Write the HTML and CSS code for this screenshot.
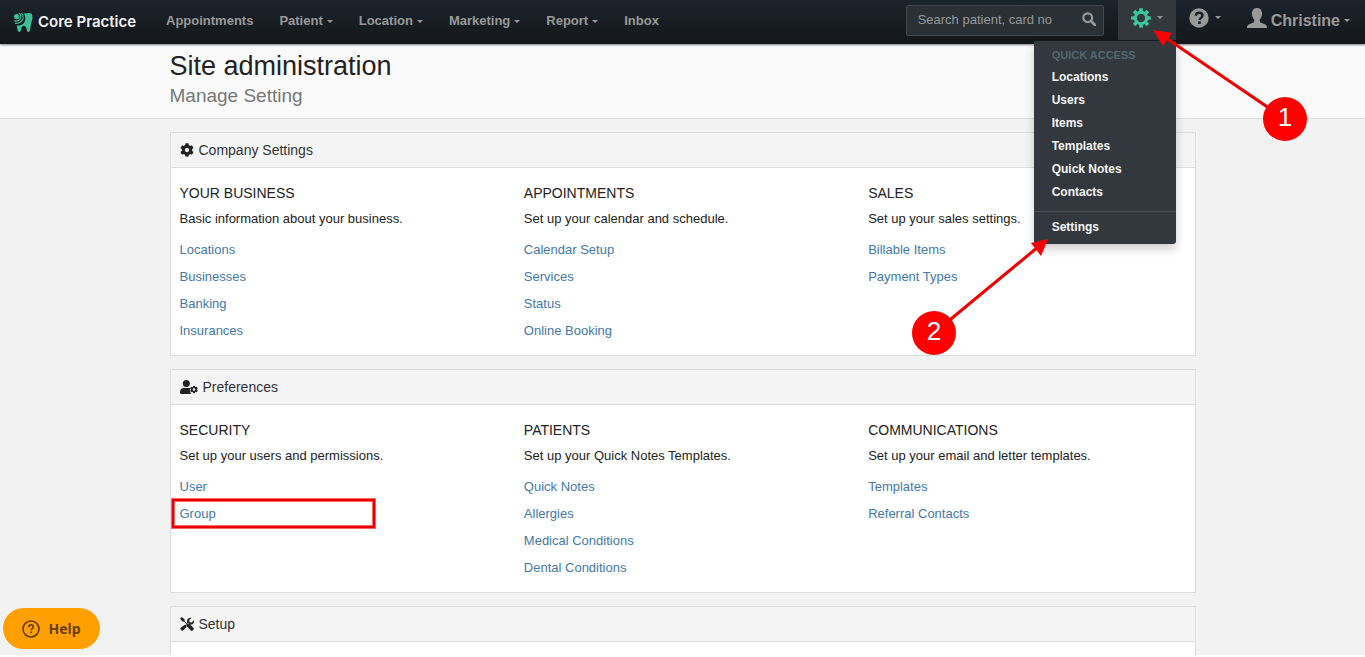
FILE: index.html
```html
<!DOCTYPE html>
<html lang="en">
<head>
    <meta charset="UTF-8">
    <meta name="viewport" content="width=device-width, initial-scale=1.0">
    <title>Site administration | Core Practice</title>
    <link rel="stylesheet" href="styles.css">
</head>
<body>
    <svg class="sprite" aria-hidden="true">
        <symbol id="icon-cog" viewBox="0 0 512 512">
            <path d="M487.4 315.7l-42.6-24.6c4.3-23.2 4.3-47 0-70.2l42.6-24.6c4.9-2.8 7.1-8.6 5.5-14-11.1-35.6-30-67.8-54.7-94.6-3.8-4.1-10-5.1-14.8-2.3L380.8 110c-17.9-15.4-38.5-27.3-60.8-35.1V25.8c0-5.6-3.9-10.5-9.4-11.7-36.7-8.2-74.3-7.8-109.2 0-5.5 1.2-9.4 6.1-9.4 11.7V75c-22.2 7.9-42.8 19.8-60.8 35.1L88.7 85.5c-4.9-2.8-11-1.9-14.8 2.3-24.7 26.7-43.6 58.9-54.7 94.6-1.7 5.4.6 11.2 5.5 14L67.3 221c-4.3 23.2-4.3 47 0 70.2l-42.6 24.6c-4.9 2.8-7.1 8.6-5.5 14 11.1 35.6 30 67.8 54.7 94.6 3.8 4.1 10 5.1 14.8 2.3l42.6-24.6c17.9 15.4 38.5 27.3 60.8 35.1v49.2c0 5.6 3.9 10.5 9.4 11.7 36.7 8.2 74.3 7.8 109.2 0 5.5-1.2 9.4-6.1 9.4-11.7v-49.2c22.2-7.9 42.8-19.8 60.8-35.1l42.6 24.6c4.9 2.8 11 1.9 14.8-2.3 24.7-26.7 43.6-58.9 54.7-94.6 1.5-5.5-.7-11.3-5.6-14.1zM256 336c-44.1 0-80-35.9-80-80s35.9-80 80-80 80 35.9 80 80-35.9 80-80 80z"/>
        </symbol>
    </svg>

    <div class="page">
        <header class="topbar">
            <a class="brand" href="#">
                <svg width="20" height="21" viewBox="0 0 20 21" aria-hidden="true">
                    <path d="M10.800 1.400C13 2 15.500.600 17.500 1.200c2 .7 2.200 3.400 1.800 5.800-.4 2.400-1.200 4.300-1.600 6.700-.4 2.500-.6 6.300-2.300 6.300-1.600 0-1.500-2.500-2.200-4.300-.5-1.300-1.200-2-2.300-2s-2 .9-2.400 2.300c-.5 1.700-.6 4-2 4-1.800 0-2.300-3.600-2.800-6.600 4.500.7 8.600-2 8.600-6.900 0-2-.5-3.700-1.500-5.100z" fill="#3dbd99"/>
                    <circle cx="3.600" cy="4.600" r="2.600" fill="#3dbd99"/>
                    <path d="M6.300 1.200c1.700 1.900 1.800 4.600.5 6.200-1.300 1.600-3.500 2-5.500 1.200M8.500.900c2.100 2.600 2.100 6.100.2 8.300-1.800 2-4.400 2.600-6.800 2" fill="none" stroke="#3dbd99" stroke-width="1.200"/>
                </svg>
                <span>Core Practice</span>
            </a>
            <nav class="nav">
                <a href="#">Appointments</a>
                <a href="#">Patient <i class="caret"></i></a>
                <a href="#">Location <i class="caret"></i></a>
                <a href="#">Marketing <i class="caret"></i></a>
                <a href="#">Report <i class="caret"></i></a>
                <a href="#">Inbox</a>
            </nav>
            <form class="search">
                <input type="text" placeholder="Search patient, card no" aria-label="Search patient, card no">
                <button type="submit" aria-label="Search">
                    <svg width="14" height="14" viewBox="0 0 14 14" aria-hidden="true">
                        <circle cx="5.700" cy="5.700" r="4.400" fill="none" stroke="currentColor" stroke-width="2.200"/>
                        <path d="M9 9l4 4" stroke="currentColor" stroke-width="2.600" stroke-linecap="round"/>
                    </svg>
                </button>
            </form>
            <div class="quick">
                <button class="tool tool-open" type="button" aria-label="Quick access">
                    <svg width="20" height="20" viewBox="-10 -10 20 20" fill="none" stroke="#3dc79c" aria-hidden="true">
                        <circle r="5.700" stroke-width="3"/>
                        <path d="M0-6.500V-9.800M0 6.500V9.800M-6.500 0H-9.800M6.500 0H9.800M4.600-4.600L6.900-6.900M-4.600-4.600L-6.900-6.900M4.600 4.600L6.900 6.900M-4.600 4.600L-6.900 6.900" stroke-width="3.600"/>
                    </svg>
                    <i class="caret"></i>
                </button>
                <div class="menu">
                    <h2>QUICK ACCESS</h2>
                    <a href="#">Locations</a>
                    <a href="#">Users</a>
                    <a href="#">Items</a>
                    <a href="#">Templates</a>
                    <a href="#">Quick Notes</a>
                    <a href="#">Contacts</a>
                    <hr>
                    <a href="#">Settings</a>
                </div>
            </div>
            <button class="tool" type="button" aria-label="Help">
                <svg width="20" height="20" viewBox="0 0 20 20" aria-hidden="true">
                    <circle cx="10" cy="10" r="9.700" fill="#999"/>
                    <path d="M6.700 7.600C6.900 5.600 8.300 4.700 10 4.700c2 0 3.500 1 3.500 2.800 0 2.400-3 2.300-3 4.500" fill="none" stroke="#181e23" stroke-width="2.400"/>
                    <path d="M9.100 13.400h2.700v2.600H9.100z" fill="#181e23"/>
                </svg>
                <i class="caret"></i>
            </button>
            <button class="tool tool-user" type="button">
                <svg width="20" height="20" viewBox="0 0 20 20" fill="#999" aria-hidden="true">
                    <path d="M10 0c3.100 0 5.100 2.200 5.100 5.500 0 2.600-1.100 4.700-2.300 6v1.700c0 .8.500 1.200 1.400 1.600l3.600 1.500c1.500.7 2.200 1.400 2.200 3.700H0c0-2.300.7-3 2.200-3.700l3.600-1.500c.9-.4 1.400-.8 1.400-1.600v-1.700c-1.200-1.300-2.300-3.400-2.300-6C4.900 2.200 6.900 0 10 0z"/>
                </svg>
                <span>Christine</span>
                <i class="caret"></i>
            </button>
        </header>

        <div class="title-bar">
            <div class="container">
                <h1>Site administration</h1>
                <p>Manage Setting</p>
            </div>
        </div>

        <main class="container main">
            <section class="panel">
                <h2 class="panel-title">
                    <svg width="14" height="14" aria-hidden="true"><use href="#icon-cog"/></svg>
                    Company Settings
                </h2>
                <div class="panel-body">
                    <div>
                        <h3>YOUR BUSINESS</h3>
                        <p>Basic information about your business.</p>
                        <ul>
                            <li><a href="#">Locations</a></li>
                            <li><a href="#">Businesses</a></li>
                            <li><a href="#">Banking</a></li>
                            <li><a href="#">Insurances</a></li>
                        </ul>
                    </div>
                    <div>
                        <h3>APPOINTMENTS</h3>
                        <p>Set up your calendar and schedule.</p>
                        <ul>
                            <li><a href="#">Calendar Setup</a></li>
                            <li><a href="#">Services</a></li>
                            <li><a href="#">Status</a></li>
                            <li><a href="#">Online Booking</a></li>
                        </ul>
                    </div>
                    <div>
                        <h3>SALES</h3>
                        <p>Set up your sales settings.</p>
                        <ul>
                            <li><a href="#">Billable Items</a></li>
                            <li><a href="#">Payment Types</a></li>
                        </ul>
                    </div>
                </div>
            </section>

            <section class="panel">
                <h2 class="panel-title">
                    <svg width="18" height="14" viewBox="0 0 18 14" aria-hidden="true">
                        <circle cx="6.300" cy="3.600" r="3.500"/>
                        <path d="M3.800 8h5.400c.4 0 .8.100 1.200.2-.8 1.500-.7 4.200 1 5.800H1.200C.5 14 0 13.500 0 12.800v-1C0 9.700 1.700 8 3.800 8z"/>
                        <use href="#icon-cog" x="10" y="5.500" width="8" height="8"/>
                    </svg>
                    Preferences
                </h2>
                <div class="panel-body">
                    <div>
                        <h3>SECURITY</h3>
                        <p>Set up your users and permissions.</p>
                        <ul>
                            <li><a href="#">User</a></li>
                            <li class="marked"><a href="#">Group</a></li>
                        </ul>
                    </div>
                    <div>
                        <h3>PATIENTS</h3>
                        <p>Set up your Quick Notes Templates.</p>
                        <ul>
                            <li><a href="#">Quick Notes</a></li>
                            <li><a href="#">Allergies</a></li>
                            <li><a href="#">Medical Conditions</a></li>
                            <li><a href="#">Dental Conditions</a></li>
                        </ul>
                    </div>
                    <div>
                        <h3>COMMUNICATIONS</h3>
                        <p>Set up your email and letter templates.</p>
                        <ul>
                            <li><a href="#">Templates</a></li>
                            <li><a href="#">Referral Contacts</a></li>
                        </ul>
                    </div>
                </div>
            </section>

            <section class="panel">
                <h2 class="panel-title">
                    <svg width="14" height="14" viewBox="0 0 14 14" aria-hidden="true">
                        <path d="M0 1.600L1.600 0l3 2.300v1.600l2.700 2.700c.8-.4 1.700-.2 2.300.4l3.900 3.900c.5.500.5 1.200 0 1.700l-.9.900c-.5.500-1.200.5-1.700 0L7 9.600c-.6-.6-.8-1.600-.4-2.300L3.900 4.600H2.300z"/>
                        <path d="M13.900 3.300c.3 1.300 0 2.500-.9 3.400-.8.800-1.900 1.100-2.900 1L9.200 6.800c-.7-.7-1.400-1-2.200-1-.3-1.400 0-3 1-4 .9-.9 2.200-1.200 3.400-.9L9.200 3.100l.4 2.100 2.100.4zM5.300 7.500l1 1c0 .5.100 1 .3 1.500l-3 3.100c-.7.7-1.900.7-2.600 0s-.7-1.900 0-2.600z"/>
                    </svg>
                    Setup
                </h2>
                <div class="panel-body"></div>
            </section>
        </main>

        <button class="help" type="button">
            <svg width="18" height="18" viewBox="0 0 18 18" fill="none" stroke="currentColor" aria-hidden="true">
                <circle cx="9" cy="9" r="8" stroke-width="1.600"/>
                <path d="M6.700 7.200c0-1.500 1-2.300 2.300-2.300s2.300.8 2.300 2.100c0 1.700-2.200 1.700-2.200 3.300" stroke-width="1.600"/>
                <path d="M9.100 11.600v1.700" stroke-width="1.800"/>
            </svg>
            Help
        </button>

        <div class="steps">
            <svg width="1365" height="400" aria-hidden="true">
                <path d="M1285 119L1166 38M934 333L1038 247" stroke="#f00000" stroke-width="3"/>
                <path d="M1153 30l19 3-9 13zM1048 239l-7 17-10-13z" fill="#f00"/>
            </svg>
            <span class="step step-1">1</span>
            <span class="step step-2">2</span>
        </div>
    </div>
</body>
</html>
```

FILE: styles.css
```css
:root {
    --text-color: #222;
    --link-color: #4578a5;
    --muted-color: #999;
    --border-color: #ddd;
    --menu-color: #32383e;
    --mark-color: #f00;
}

*,
*::after {
    box-sizing: border-box;
    margin: 0;
    padding: 0;
}

html {
    background-color: #fff;
}

body {
    font-family: "Liberation Sans", Arial, Helvetica, sans-serif;
    font-size: 13px;
    line-height: 20px;
    color: var(--text-color);
}

a {
    color: var(--link-color);
    text-decoration: none;
}

button {
    font: inherit;
    color: inherit;
    background: none;
    border: none;
    cursor: pointer;
}

.sprite {
    position: absolute;
    width: 0;
    height: 0;
}

.page {
    position: relative;
    height: calc(100vh - 2px);
    overflow: hidden;
    background-color: #f2f2f2;
}

.container {
    max-width: 1026px;
    margin: 0 auto;
}

/* top bar */
.topbar {
    display: flex;
    align-items: flex-start;
    height: 44px;
    padding: 0 2px 0 13px;
    background: linear-gradient(#1b232c, #14171a);
    box-shadow: 0 1px 2px rgba(0, 0, 0, 0.5);
    position: relative;
    color: var(--muted-color);
}

.brand {
    display: flex;
    align-items: center;
    gap: 5px;
    height: 44px;
    width: 140px;
    font-family: Inter, sans-serif;
    font-size: 15px;
    font-weight: 600;
    color: #f2f2f2;
    white-space: nowrap;
}

.nav {
    display: flex;
    flex: 1;
    font-weight: bold;
}

.nav a {
    display: flex;
    align-items: center;
    gap: 4px;
    height: 42px;
    padding: 0 13px;
    color: var(--muted-color);
}

.caret {
    border: 3px solid transparent;
    border-top-color: currentColor;
    border-bottom: 0;
}

.search {
    display: flex;
    width: 198px;
    height: 31px;
    margin: 5px 14px 0 0;
    background-color: #293036;
    border: 1px solid #41474c;
    border-radius: 2px;
}

.search input {
    flex: 1;
    min-width: 0;
    padding: 0 0 2px 11px;
    font: inherit;
    color: var(--muted-color);
    background: none;
    border: none;
    outline: none;
}

.search input::placeholder {
    color: var(--muted-color);
}

.search button {
    width: 28px;
    padding-top: 2px;
}

.tool {
    display: flex;
    align-items: center;
    gap: 6px;
    height: 40px;
    padding: 0 13px 5px;
}

.tool-user {
    gap: 4px;
    font-size: 16px;
    font-weight: bold;
}

.tool-user span {
    padding-top: 6px;
}

.tool-user .caret {
    margin-top: 6px;
}

.quick {
    position: relative;
}

.tool-open {
    background-color: var(--menu-color);
}

.menu {
    position: absolute;
    top: 41px;
    right: 0;
    z-index: 1;
    width: 142px;
    padding: 4px 0 5px;
    background-color: var(--menu-color);
    border-radius: 0 0 3px 3px;
    box-shadow: 0 5px 10px rgba(0, 0, 0, 0.2);
    font-size: 12px;
    font-weight: bold;
}

.menu h2 {
    margin-bottom: 1px;
    padding: 0 18px;
    font-size: 11px;
    color: #536771;
}

.menu a {
    display: block;
    padding: 0 18px;
    line-height: 23px;
    color: #f5f5f5;
}

.menu hr {
    margin: 7px 0 4px;
    border: none;
    border-top: 1px solid #4b5156;
}

/* page heading */
.title-bar {
    padding: 6px 0 9px;
    background-color: #fafafa;
    border-bottom: 1px solid var(--border-color);
}

.title-bar h1 {
    font-size: 27px;
    line-height: 32px;
    font-weight: normal;
}

.title-bar p {
    font-size: 19px;
    line-height: 27px;
    color: #777;
}

/* settings panels */
.main {
    display: flex;
    flex-direction: column;
    gap: 13px;
    padding-top: 13px;
}

.panel {
    background-color: #fff;
    border: 1px solid var(--border-color);
}

.panel-title {
    display: flex;
    align-items: center;
    gap: 5px;
    height: 35px;
    padding: 0 9px 1px;
    font-size: 14px;
    font-weight: normal;
    color: #333;
    background-color: #f4f4f4;
    border-bottom: 1px solid var(--border-color);
}

.panel-title svg {
    fill: #222;
}

.panel-body {
    display: grid;
    grid-template-columns: repeat(3, 1fr);
    gap: 18px;
    min-height: 40px;
    padding: 15px 0 11px 9px;
}

.panel-body h3 {
    margin-bottom: 6px;
    font-size: 14px;
    font-weight: normal;
}

.panel-body ul {
    margin-top: 7px;
    list-style: none;
}

.panel-body li {
    line-height: 27px;
}

.marked {
    position: relative;
}

.marked::after {
    content: "";
    position: absolute;
    top: -1px;
    left: -8px;
    width: 203px;
    height: 29px;
    border: 2px solid #e60000;
    box-shadow: 0 0 0 1px #f66, inset 0 0 0 1px #f66;
    pointer-events: none;
}

/* help launcher */
.help {
    position: absolute;
    left: 3px;
    bottom: 6px;
    display: flex;
    align-items: center;
    justify-content: center;
    gap: 8px;
    width: 97px;
    height: 41px;
    font-family: "Noto Sans", sans-serif;
    font-size: 14px;
    font-weight: bold;
    color: #663f00;
    background-color: #ffa000;
    border-radius: 21px;
}

/* numbered walkthrough markers */
.steps {
    position: absolute;
    top: 0;
    left: 0;
    z-index: 2;
    pointer-events: none;
}

.step {
    position: absolute;
    width: 44px;
    height: 44px;
    font-size: 26px;
    line-height: 41px;
    text-align: center;
    color: #fff;
    background-color: var(--mark-color);
    border-radius: 50%;
}

.step-1 {
    top: 97px;
    left: 1263px;
}

.step-2 {
    top: 311px;
    left: 912px;
}
```
